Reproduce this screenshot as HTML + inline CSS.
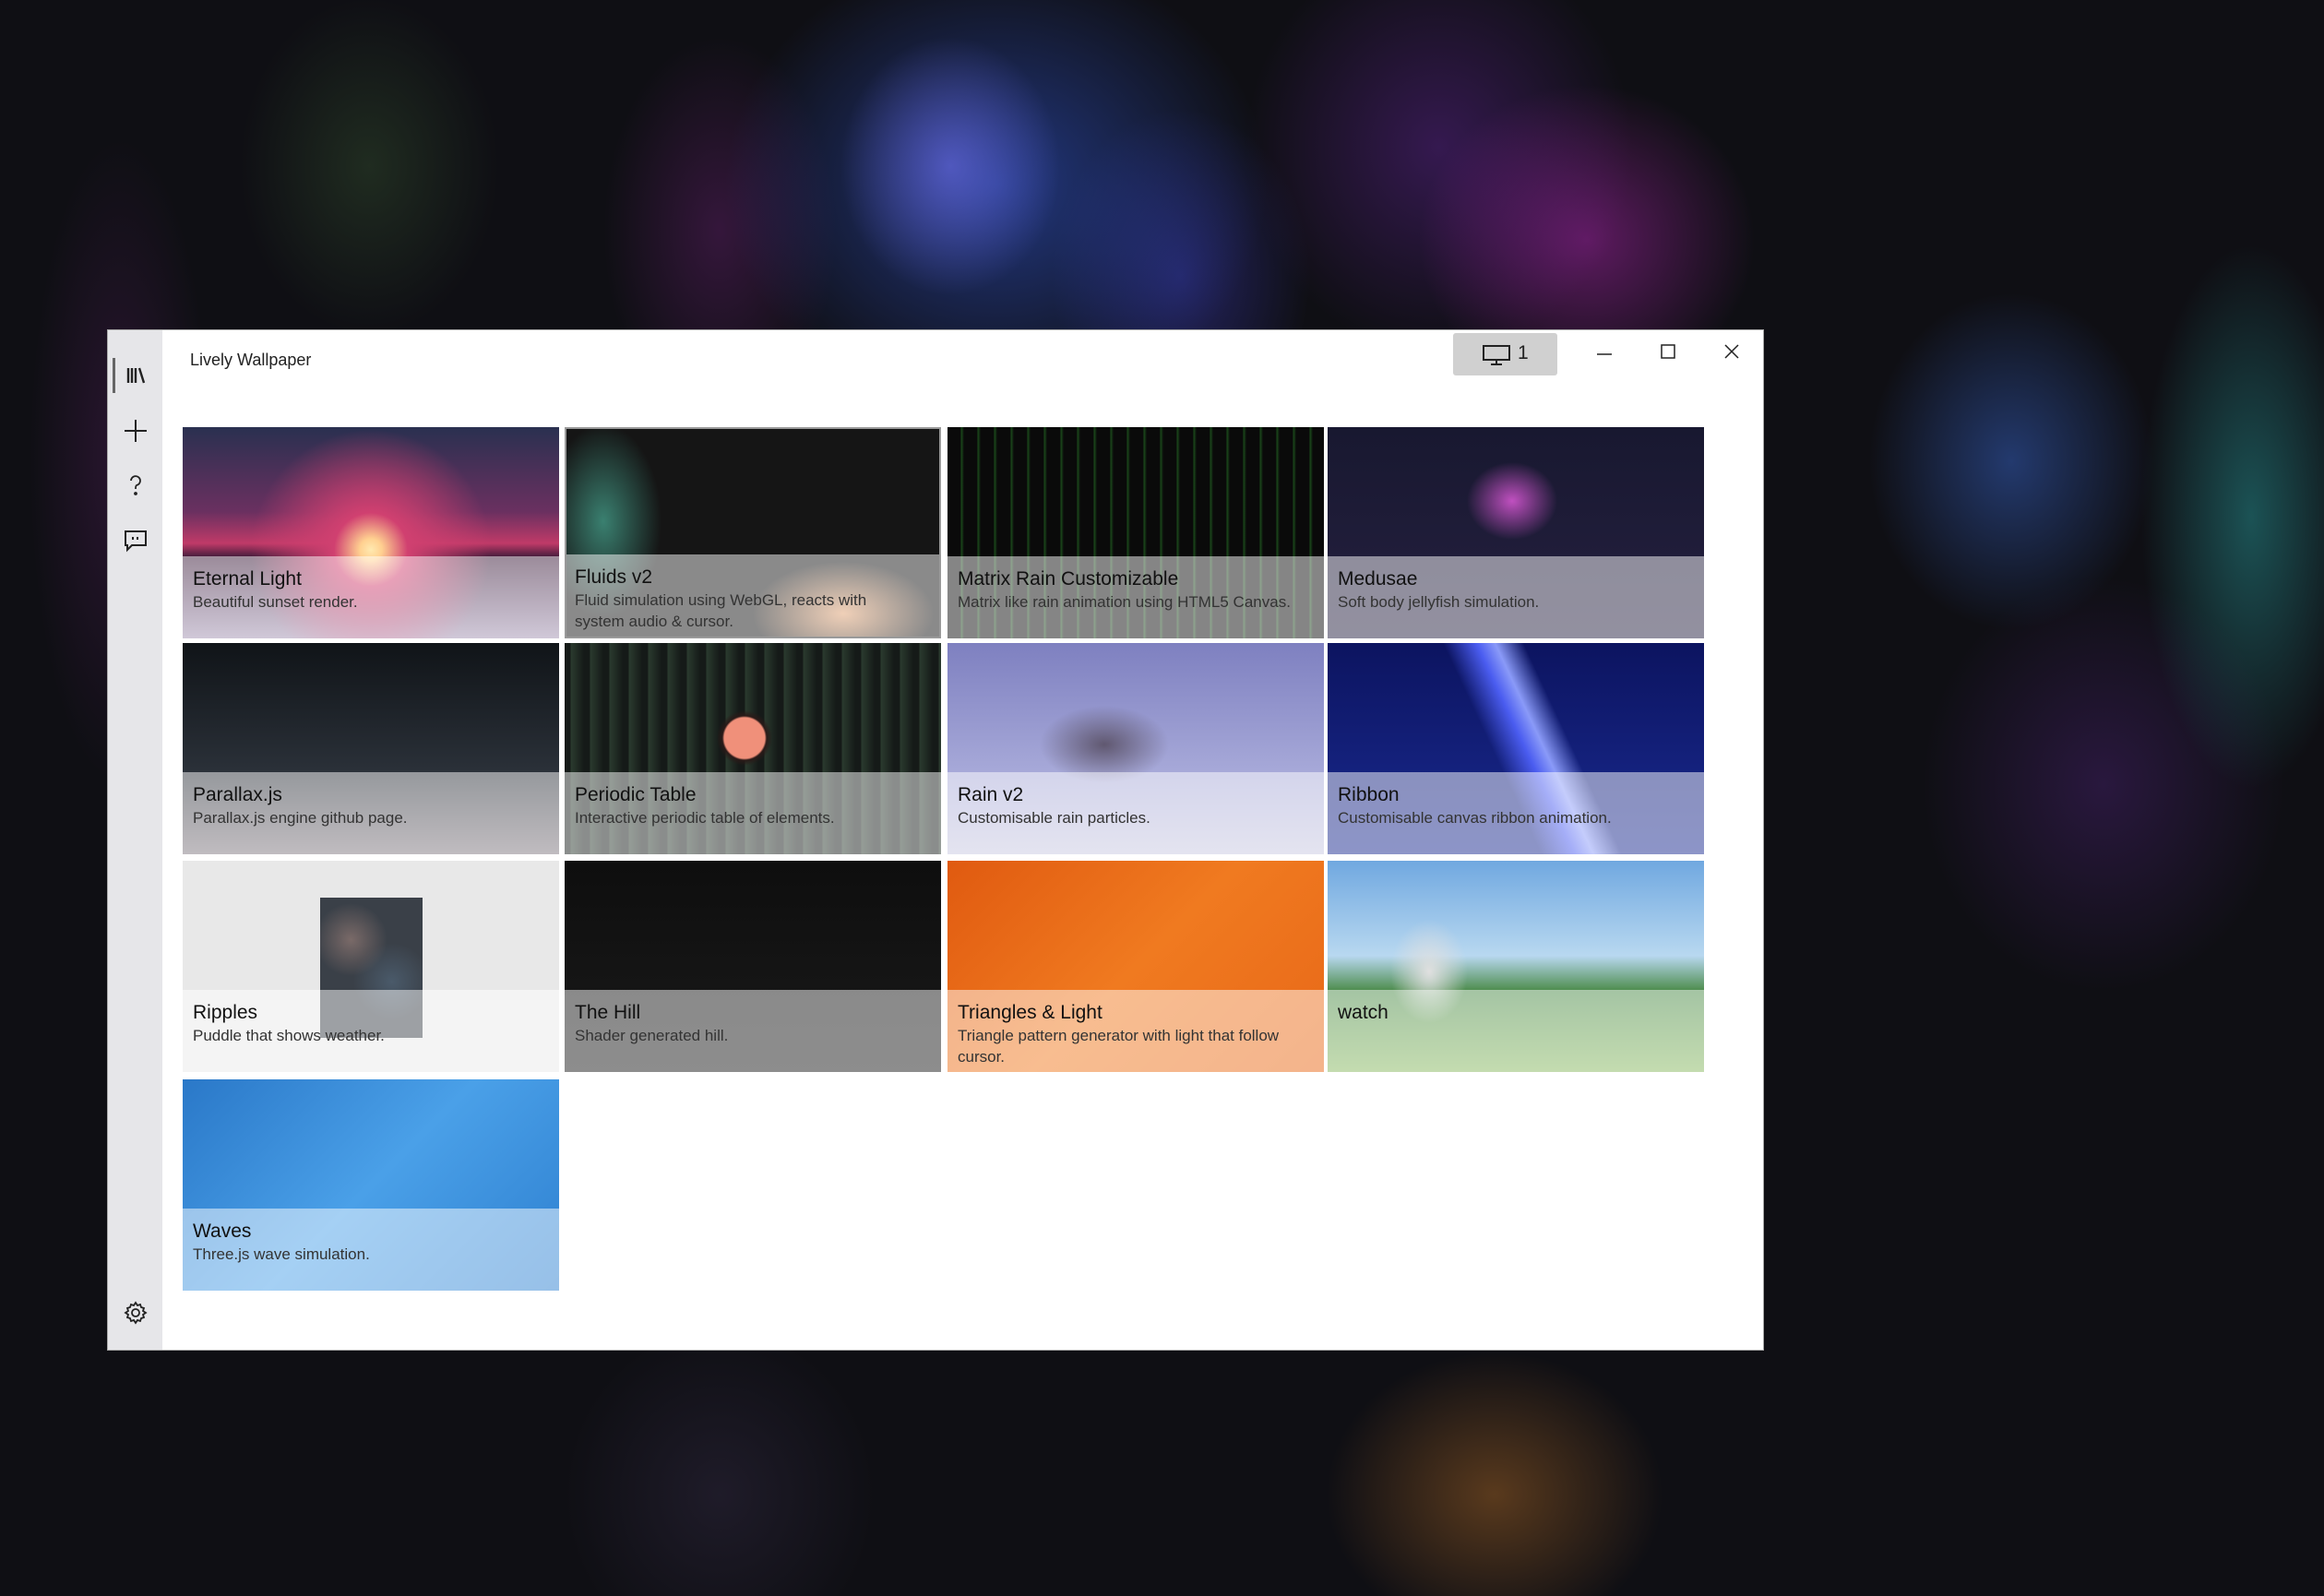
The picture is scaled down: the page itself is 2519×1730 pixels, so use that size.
<!DOCTYPE html>
<html><head><meta charset="utf-8"><style>
*{margin:0;padding:0;box-sizing:border-box}
html,body{width:2519px;height:1730px;overflow:hidden}
body{position:relative;font-family:"Liberation Sans",sans-serif;
background:
radial-gradient(ellipse 170px 200px at 1030px 180px,rgba(120,120,255,.55),transparent 70%),
radial-gradient(ellipse 420px 360px at 1080px 200px,rgba(50,90,220,.55),transparent 70%),
radial-gradient(ellipse 200px 260px at 1280px 300px,rgba(60,60,190,.45),transparent 70%),
radial-gradient(ellipse 260px 240px at 1720px 260px,rgba(190,40,190,.45),transparent 70%),
radial-gradient(ellipse 300px 320px at 1560px 160px,rgba(110,40,170,.4),transparent 70%),
radial-gradient(ellipse 180px 300px at 780px 250px,rgba(140,40,150,.3),transparent 70%),
radial-gradient(ellipse 200px 260px at 400px 180px,rgba(70,110,60,.3),transparent 70%),
radial-gradient(ellipse 140px 500px at 130px 500px,rgba(120,40,130,.25),transparent 70%),
radial-gradient(ellipse 220px 260px at 2180px 500px,rgba(60,110,220,.45),transparent 70%),
radial-gradient(ellipse 170px 420px at 2440px 560px,rgba(40,150,150,.5),transparent 70%),
radial-gradient(ellipse 280px 320px at 2280px 850px,rgba(90,40,140,.35),transparent 70%),
radial-gradient(ellipse 260px 220px at 1620px 1620px,rgba(180,110,40,.45),transparent 70%),
radial-gradient(ellipse 240px 260px at 780px 1620px,rgba(60,50,80,.35),transparent 70%),
#0f0f14}
.win{position:absolute;left:116px;top:357px;width:1796px;height:1107px;background:#fff;border:1px solid #aaa}
.side{position:absolute;left:0;top:0;width:59px;height:100%;background:#e6e6e9}
.ind{position:absolute;left:5px;top:30px;width:3px;height:38px;background:#666}
.ic{position:absolute;left:17px;width:26px;height:26px}
.title{position:absolute;left:89px;top:22px;font-size:18px;color:#222}
.mon{position:absolute;left:1458px;top:3px;width:113px;height:46px;background:#d0d0d0;border-radius:3px}
.tile{position:absolute;width:408px;height:229px;overflow:hidden}
.ov{position:absolute;left:0;right:0;bottom:0;height:89px;background:rgba(255,255,255,.5);padding:12px 30px 0 11px}
.ov b{display:block;font-weight:normal;font-size:21px;color:#111;line-height:26px}
.ov span{display:block;font-size:17px;color:#333;line-height:23px}
</style></head><body>
<div class="win">
 <div class="side">
  <div class="ind"></div>
  <svg class="ic" style="top:36px" viewBox="0 0 26 26" fill="none" stroke="#222" stroke-width="2.4"><path d="M5 5v16M9 5v16M13 5v16M17 5l5 16"/></svg>
  <svg class="ic" style="top:96px" viewBox="0 0 26 26" stroke="#222" stroke-width="2"><path d="M13 1v24M1 13h24"/></svg>
  <svg class="ic" style="top:155px" viewBox="0 0 26 26" fill="none" stroke="#222" stroke-width="1.8"><path d="M8 8a5 5 0 1 1 6 5c-1 .5-1 2-1 4"/><circle cx="13" cy="22" r="1" fill="#222"/></svg>
  <svg class="ic" style="top:215px" viewBox="0 0 26 26" fill="none" stroke="#222" stroke-width="2"><path d="M2 3h22v15H9l-5 5v-5H2z"/><path d="M10 9v3M15 9v3"/></svg>
  <svg class="ic" style="top:1052px" viewBox="0 0 26 26" fill="none" stroke="#222" stroke-width="1.8"><circle cx="13" cy="13" r="4"/><path d="M13 2l2 3 3-1 1 3 3 1-1 3 3 2-3 2 1 3-3 1-1 3-3-1-2 3-2-3-3 1-1-3-3-1 1-3-3-2 3-2-1-3 3-1 1-3 3 1z"/></svg>
 </div>
 <div class="title">Lively Wallpaper</div>
 <div class="mon"><svg style="position:absolute;left:32px;top:13px" width="30" height="22" viewBox="0 0 30 22" fill="none" stroke="#222" stroke-width="2"><rect x="1" y="1" width="28" height="15"/><path d="M15 16v4M9 21h12"/></svg><span style="position:absolute;left:70px;top:10px;font-size:21px;color:#222">1</span></div>
 <svg style="position:absolute;left:1614px;top:18px" width="16" height="16" stroke="#222" stroke-width="1.5"><path d="M0 8h16"/></svg>
 <svg style="position:absolute;left:1683px;top:15px" width="16" height="16" fill="none" stroke="#222" stroke-width="1.5"><rect x="1" y="1" width="14" height="14"/></svg>
 <svg style="position:absolute;left:1752px;top:15px" width="16" height="16" stroke="#222" stroke-width="1.5"><path d="M1 1l14 14M15 1L1 15"/></svg>
</div>

<div class="tile" style="left:198px;top:463px;background:radial-gradient(circle at 50% 58% ,#ffe9b0 0,#ffd090 12px,#d04070 40px,transparent 130px),linear-gradient(#2a3050 0,#6a3060 40%,#c03a68 55%,#3a1a38 62%,#a090b0 100%)"><div class="ov"><b>Eternal Light</b><span>Beautiful sunset render.</span></div></div>
<div class="tile" style="left:612px;top:463px;border:2px solid #999;background:radial-gradient(ellipse 90px 150px at 40px 100px,#3a8070,transparent 70%),radial-gradient(ellipse 140px 80px at 300px 200px,#e0a070,transparent 70%),#151515"><div class="ov" style="padding-left:9px"><b>Fluids v2</b><span>Fluid simulation using WebGL, reacts with system audio &amp; cursor.</span></div></div>
<div class="tile" style="left:1027px;top:463px;background:repeating-linear-gradient(90deg,#0a0a0a 0,#0a0a0a 14px,#1b4a1b 15px,#0a0a0a 18px),#050505"><div class="ov" style="padding-right:8px"><b>Matrix Rain Customizable</b><span>Matrix like rain animation using HTML5 Canvas.</span></div></div>
<div class="tile" style="left:1439px;top:463px;background:radial-gradient(ellipse 70px 60px at 200px 80px,#c050c0,transparent 70%),linear-gradient(#181830,#252040)"><div class="ov"><b>Medusae</b><span>Soft body jellyfish simulation.</span></div></div>

<div class="tile" style="left:198px;top:697px;background:linear-gradient(#101418,#2a3038 60%,#807880)"><div class="ov"><b>Parallax.js</b><span>Parallax.js engine github page.</span></div></div>
<div class="tile" style="left:612px;top:697px;background:radial-gradient(circle at 195px 103px,#f0907a 0,#f0907a 22px,#2a1a18 24px,transparent 30px),repeating-linear-gradient(90deg,#151a18 0,#151a18 6px,#2a3a2e 7px,#151a18 21px),#151515"><div class="ov"><b>Periodic Table</b><span>Interactive periodic table of elements.</span></div></div>
<div class="tile" style="left:1027px;top:697px;background:radial-gradient(ellipse 100px 60px at 170px 110px,#605870,transparent 70%),linear-gradient(#7e80c0,#a6a8d8 60%,#c8c8e0)"><div class="ov"><b>Rain v2</b><span>Customisable rain particles.</span></div></div>
<div class="tile" style="left:1439px;top:697px;background:linear-gradient(65deg,transparent 45%,#4a5cf0 52%,#8a9af8 56%,transparent 62%),linear-gradient(#0c1460,#1a2a90)"><div class="ov"><b>Ribbon</b><span>Customisable canvas ribbon animation.</span></div></div>

<div class="tile" style="left:198px;top:933px;background:#e8e8e8"><div style="position:absolute;left:149px;top:40px;width:111px;height:152px;background:radial-gradient(circle at 30% 30%,#7a6a68,transparent 30%),radial-gradient(circle at 70% 60%,#4a5a6a,transparent 35%),#3a4048"></div><div class="ov"><b>Ripples</b><span>Puddle that shows weather.</span></div></div>
<div class="tile" style="left:612px;top:933px;background:linear-gradient(#0e0e0e,#1a1a1a)"><div class="ov"><b>The Hill</b><span>Shader generated hill.</span></div></div>
<div class="tile" style="left:1027px;top:933px;background:linear-gradient(135deg,#e05a10,#f07a20 50%,#e86818)"><div class="ov"><b>Triangles &amp; Light</b><span>Triangle pattern generator with light that follow cursor.</span></div></div>
<div class="tile" style="left:1439px;top:933px;background:radial-gradient(ellipse 60px 80px at 110px 120px,#e0e0e0,transparent 70%),linear-gradient(#70a8e0,#b8d8f0 45%,#4a8a48 62%,#88b860)"><div class="ov"><b>watch</b><span></span></div></div>

<div class="tile" style="left:198px;top:1170px;background:linear-gradient(135deg,#2a78c8,#4aa0e8 50%,#2e80d0)"><div class="ov"><b>Waves</b><span>Three.js wave simulation.</span></div></div>
</body></html>
